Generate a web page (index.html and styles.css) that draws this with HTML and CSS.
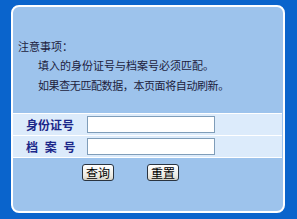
FILE: index.html
```html
<!DOCTYPE html>
<html lang="zh-CN">
<head>
    <meta charset="UTF-8">
    <title>档案查询</title>
    <link rel="stylesheet" href="styles.css">
</head>
<body>
    <div class="panel">
        <div class="notes">
            <p>注意事项：</p>
            <p class="indent">填入的身份证号与档案号必须匹配。</p>
            <p class="indent">如果查无匹配数据，本页面将自动刷新。</p>
        </div>

        <div class="form-rows">
            <div class="row">
                <span class="label">身份证号</span>
                <input type="text" class="field">
            </div>
            <div class="row">
                <span class="label spaced">档 案 号</span>
                <input type="text" class="field">
            </div>
        </div>

        <div class="buttons">
            <button type="button">查询</button>
            <button type="button">重置</button>
        </div>
    </div>
</body>
</html>
```

FILE: styles.css
```css
body {
    margin: 0;
    padding: 5px 12px 6px 11px;
    background-color: #0a64cc;
    font-family: "Noto Sans CJK SC", "Liberation Sans", sans-serif;
    font-size: 11px;
    color: #1c1c3c;
}
.panel {
    height: 204px;
    border: 2px solid #ffffff;
    border-radius: 8px;
    background-color: #9dc3ec;
    box-sizing: content-box;
}
.notes {
    padding: 30px 0 0 5px;
    height: 76px;
}
.notes p {
    margin: 0;
    line-height: 19px;
}
.notes .indent {
    padding-left: 20px;
}
.notes .indent + .indent {
    margin-top: 1px;
    letter-spacing: -0.4px;
}
.form-rows {
    display: flex;
    flex-direction: column;
    gap: 1px;
    border-top: 1px solid #ffffff;
    border-bottom: 1px solid #ffffff;
    background-color: #ffffff;
    margin-right: 1px;
}
.row {
    display: flex;
    align-items: center;
    height: 21px;
    background-color: #dcebfb;
}
.label {
    width: 61px;
    padding-left: 13px;
    font-weight: bold;
    font-size: 12px;
    color: #1c288a;
}
.spaced {
    word-spacing: 4px;
}
.field {
    width: 126px;
    height: 15px;
    padding: 0;
    border: 1px solid #7f9db9;
    background-color: #ffffff;
}
.buttons {
    display: flex;
    gap: 33px;
    padding: 6px 0 0 69px;
}
button {
    width: 32px;
    height: 17px;
    padding: 0;
    border: 1px solid #2a3440;
    border-radius: 3px;
    background: linear-gradient(#ffffff, #ecebe4 70%, #d6d3c8);
    font-family: "Noto Sans CJK SC", sans-serif;
    font-size: 12px;
    line-height: 14px;
    color: #000000;
}
```
